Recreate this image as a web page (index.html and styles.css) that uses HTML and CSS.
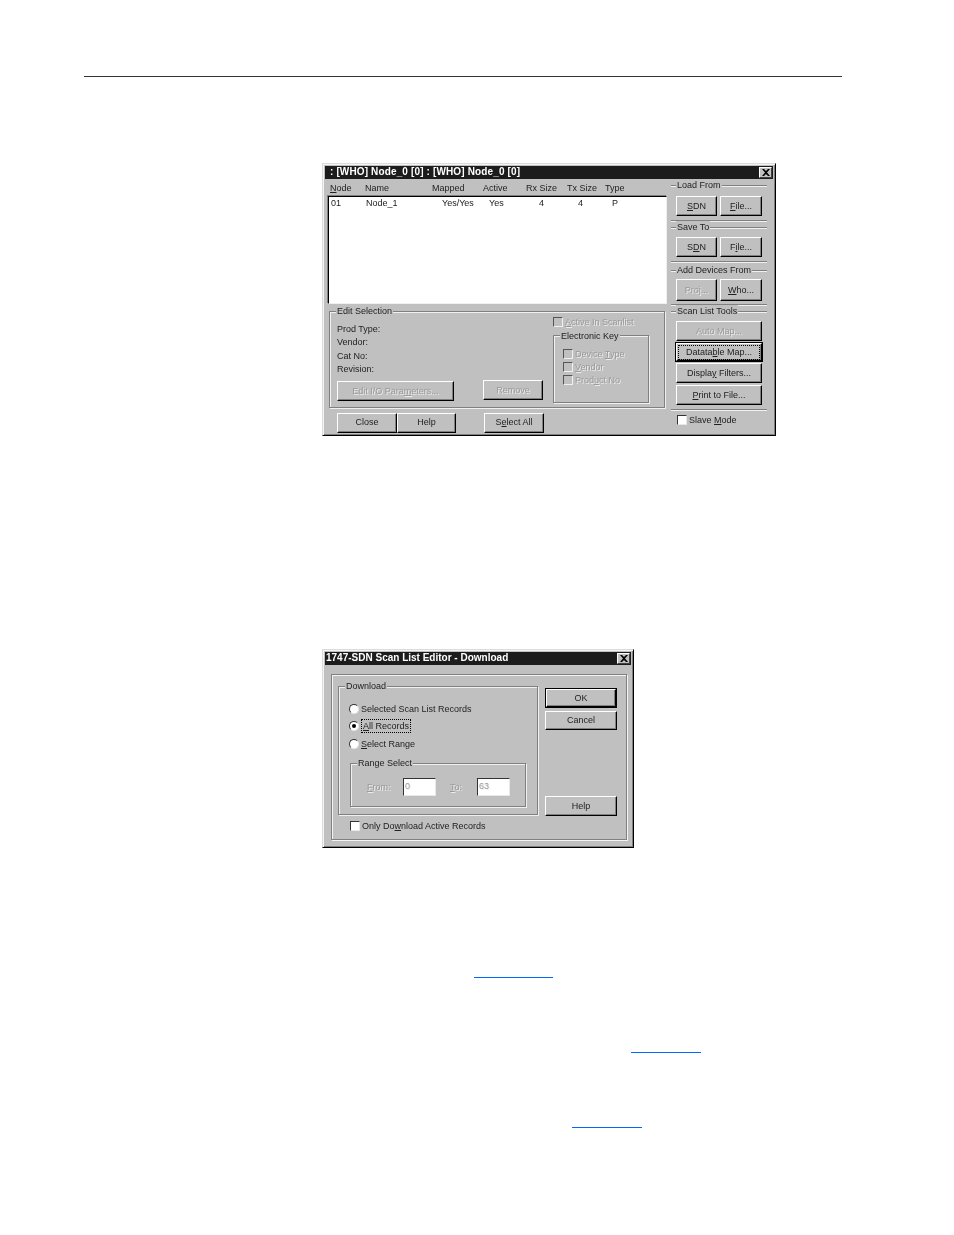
FILE: index.html
```html
<!DOCTYPE html>
<html lang="en">
<head>
<meta charset="utf-8">
<title>Scan List Editor</title>
<link rel="stylesheet" href="styles.css">
</head>
<body>
<div class="top-rule"></div>

<section class="dialog scan">
  <header class="title">
    <span>: [WHO] Node_0 [0] : [WHO] Node_0 [0]</span>
    <span class="close"><svg viewBox="0 0 8 7" width="8" height="7"><path d="M0 0h2l2 2 2-2h2L5 3.5 8 7H6L4 5 2 7H0l3-3.5z"/></svg></span>
  </header>
  <div class="scan-body">
    <div class="scan-left">
      <div class="cols head-cols">
        <span><u>N</u>ode</span><span>Name</span><span>Mapped</span><span>Active</span><span>Rx Size</span><span>Tx Size</span><span>Type</span>
      </div>
      <div class="listbox">
        <div class="cols row-cols">
          <span>01</span><span>Node_1</span><span>Yes/Yes</span><span>Yes</span><span>4</span><span>4</span><span>P</span>
        </div>
      </div>
      <div class="group edit">
        <span class="legend">Edit Selection</span>
        <div class="edit-left">
          <div class="info">Prod Type:</div>
          <div class="info">Vendor:</div>
          <div class="info">Cat No:</div>
          <div class="info">Revision:</div>
          <div class="edit-buttons">
            <button class="btn off b-edit">Edit I/O Para<u>m</u>eters...</button>
            <button class="btn off b-remove">Remove</button>
          </div>
        </div>
        <div class="edit-right">
          <label class="check off active-in"><i class="box"></i><span><u>A</u>ctive In Scanlist</span></label>
          <div class="group key">
            <span class="legend">Electronic Key</span>
            <label class="check off"><i class="box"></i><span>Device <u>T</u>ype</span></label>
            <label class="check off"><i class="box"></i><span><u>V</u>endor</span></label>
            <label class="check off"><i class="box"></i><span>Prod<u>u</u>ct No</span></label>
          </div>
        </div>
      </div>
      <div class="bottom-buttons">
        <button class="btn b-close">Close</button>
        <button class="btn b-help">Help</button>
        <button class="btn b-all">S<u>e</u>lect All</button>
      </div>
    </div>
    <aside class="scan-right">
      <div class="tool t-load">
        <span class="legend">Load From</span>
        <div class="pair"><button class="btn"><u>S</u>DN</button><button class="btn"><u>F</u>ile...</button></div>
      </div>
      <div class="tool t-save">
        <span class="legend">Save To</span>
        <div class="pair"><button class="btn">S<u>D</u>N</button><button class="btn">F<u>i</u>le...</button></div>
      </div>
      <div class="tool t-add">
        <span class="legend">Add Devices From</span>
        <div class="pair"><button class="btn off">Proj...</button><button class="btn"><u>W</u>ho...</button></div>
      </div>
      <div class="tool t-scan">
        <span class="legend">Scan List Tools</span>
        <button class="btn off">Auto Map...</button>
        <button class="btn default"><span class="focus wide">Datata<u>b</u>le Map...</span></button>
        <button class="btn">Displa<u>y</u> Filters...</button>
        <button class="btn"><u>P</u>rint to File...</button>
      </div>
      <label class="check slave"><i class="box live"></i><span>Slave <u>M</u>ode</span></label>
    </aside>
  </div>
</section>

<section class="dialog download">
  <header class="title">
    <span>1747-SDN Scan List Editor - Download</span>
    <span class="close"><svg viewBox="0 0 8 7" width="8" height="7"><path d="M0 0h2l2 2 2-2h2L5 3.5 8 7H6L4 5 2 7H0l3-3.5z"/></svg></span>
  </header>
  <div class="panel">
    <div class="panel-top">
      <div class="group dl">
        <span class="legend">Download</span>
        <label class="radio"><i class="dot"></i><span>Selected Scan List Records</span></label>
        <label class="radio"><i class="dot on"></i><span class="focus"><u>A</u>ll Records</span></label>
        <label class="radio"><i class="dot"></i><span><u>S</u>elect Range</span></label>
        <div class="group range">
          <span class="legend">Range Select</span>
          <span class="lbl-from off-text"><u>F</u>rom:</span>
          <span class="field off-text">0</span>
          <span class="lbl-to off-text"><u>T</u>o:</span>
          <span class="field off-text">63</span>
        </div>
      </div>
      <div class="dl-buttons">
        <button class="btn default b-ok">OK</button>
        <button class="btn b-cancel">Cancel</button>
        <button class="btn b-dlhelp">Help</button>
      </div>
    </div>
    <label class="check only"><i class="box live"></i><span>Only Do<u>w</u>nload Active Records</span></label>
  </div>
</section>

<div class="link link-a"></div>
<div class="link link-b"></div>
<div class="link link-c"></div>
</body>
</html>
```
FILE: styles.css
```css
* { box-sizing: border-box; }
html, body { margin: 0; padding: 0; background: #fff; }
body {
  width: 954px;
  height: 1235px;
  overflow: hidden;
  font: 9px/12px "Liberation Sans", Arial, sans-serif;
  color: #222;
}
.top-rule { height: 1px; width: 758px; margin: 76px 0 0 84px; background: #333; }

.dialog {
  margin-left: 322px;
  background: #c0c0c0;
  border: 1px solid;
  border-color: #dcdcdc #000 #000 #dcdcdc;
  box-shadow: inset 1px 1px 0 #f4f4f4, inset -1px -1px 0 #808080;
  padding: 2px 2px 0 2px;
  filter: blur(0.25px);
}
.scan { margin-top: 86px; width: 454px; height: 273px; }
.download { margin-top: 213px; width: 312px; height: 199px; }

.title {
  height: 13px;
  background: #1c1c1c;
  color: #fff;
  font-weight: 700;
  font-size: 10px;
  line-height: 11px;
  padding-left: 1px;
  display: flex;
  justify-content: space-between;
  align-items: flex-start;
  white-space: pre;
}
.scan .title { padding-left: 5px; letter-spacing: 0.14px; }
.close {
  width: 13px;
  height: 11px;
  margin: 1px 1px 0 0;
  background: #c0c0c0;
  border: 1px solid;
  border-color: #fff #404040 #404040 #fff;
  display: flex;
  align-items: center;
  justify-content: center;
}
.close svg { display: block; fill: #000; }

.btn {
  display: block;
  padding: 0;
  font: inherit;
  color: #222;
  background: #c0c0c0;
  border: 1px solid;
  border-color: #fff #000 #000 #fff;
  box-shadow: inset -1px -1px 0 #808080;
  text-align: center;
}
.btn.off { color: #9a9a9a; text-shadow: 1px 1px 0 #ececec; }
.btn.default { outline: 1px solid #000; }
.focus { border: 1px dotted #000; padding: 0 1px; }
.focus.wide { display: block; margin: 0 1px; line-height: 13px; }
.off-text { color: #9a9a9a; text-shadow: 1px 1px 0 #ececec; }

.group {
  position: relative;
  border: 1px solid #808080;
  box-shadow: 1px 1px 0 #f0f0f0, inset 1px 1px 0 #f0f0f0;
}
.legend {
  position: absolute;
  top: -7px;
  left: 6px;
  background: #c0c0c0;
  padding: 0 1px;
  line-height: 12px;
  white-space: nowrap;
}

/* scan list editor */
.scan-body { display: flex; height: 253px; }
.scan-left { width: 343px; padding: 3px 0 0 3px; }
.cols { display: grid; white-space: nowrap; }
.head-cols { grid-template-columns: 35px 67px 51px 43px 41px 38px 30px; height: 14px; padding-left: 2px; }
.row-cols { grid-template-columns: 35px 76px 47px 50px 39px 34px 20px; padding-left: 2px; height: 13px; }
.listbox {
  width: 339px;
  height: 108px;
  background: #fff;
  border: 1px solid;
  border-color: #000 #f0f0f0 #f0f0f0 #000;
  box-shadow: -1px -1px 0 #808080;
}
.edit {
  width: 336px;
  height: 97px;
  margin: 7px 0 0 1px;
  display: flex;
}
.edit-left { width: 223px; padding: 11px 0 0 7px; flex: none; }
.info { height: 13.3px; line-height: 13px; }
.edit-buttons { display: flex; align-items: flex-start; margin-top: 4px; }
.b-edit { width: 117px; height: 20px; margin-top: 1px; padding-bottom: 1px; }
.b-remove { width: 60px; height: 20px; margin-left: 29px; }
.edit-right { padding-top: 4px; }
.check { display: flex; align-items: center; white-space: nowrap; }
.check.off { color: #9a9a9a; text-shadow: 1px 1px 0 #ececec; }
.box {
  display: block;
  flex: none;
  width: 10px;
  height: 10px;
  margin-right: 2px;
  background: #c0c0c0;
  border: 1px solid;
  border-color: #555 #f0f0f0 #f0f0f0 #555;
}
.box.live { background: #fff; border-color: #333 #e8e8e8 #e8e8e8 #333; }
.active-in { height: 12px; margin-bottom: 2px; }
.key {
  width: 96px;
  height: 68px;
  margin-top: 7px;
  padding: 11px 0 0 9px;
}
.key .legend { top: -6px; }
.key .check { height: 13px; }
.bottom-buttons { display: flex; margin: 5px 0 0 9px; }
.bottom-buttons .btn { height: 20px; padding-bottom: 2px; }
.b-close { width: 60px; }
.b-help { width: 59px; }
.b-all { width: 60px; margin-left: 28px; }

.scan-right { width: 103px; padding-left: 3px; }
.tool {
  position: relative;
  width: 96px;
  border: solid #808080;
  border-width: 1px 0;
  box-shadow: 0 1px 0 #f0f0f0, inset 0 1px 0 #f0f0f0;
}
.tool .legend { left: 5px; top: -7px; }
.pair { display: flex; gap: 3px; padding-left: 5px; }
.pair .btn { height: 20px; width: 41px; }
.pair .btn + .btn { width: 42px; }
.t-load { margin-top: 6px; height: 36px; padding-top: 10px; }
.t-save { margin-top: 6px; height: 35px; padding-top: 9px; }
.t-add { margin-top: 8px; height: 35px; padding-top: 8px; }
.t-add .btn { height: 22px; }
.t-scan {
  margin-top: 6px;
  height: 99px;
  padding: 9px 0 0 5px;
  display: flex;
  flex-direction: column;
  align-items: flex-start;
  gap: 2px;
}
.t-scan .btn { width: 86px; height: 20px; }
.t-scan .btn.default { height: 18px; }
.slave { margin: 4px 0 0 6px; }

/* download dialog */
.panel {
  position: relative;
  width: 296px;
  height: 166px;
  margin: 9px 0 0 6px;
  border: 1px solid #808080;
  box-shadow: 1px 1px 0 #f4f4f4, inset 1px 1px 0 #f4f4f4;
  padding: 11px 0 0 6px;
}
.panel-top { display: flex; align-items: flex-start; }
.dl { width: 200px; height: 129px; padding: 13px 0 0 10px; }
.radio { display: flex; align-items: center; height: 17.5px; white-space: nowrap; }
.dot {
  display: block;
  flex: none;
  position: relative;
  width: 10px;
  height: 10px;
  margin-right: 2px;
  border-radius: 50%;
  background: #fff;
  border: 1px solid;
  border-color: #333 #e8e8e8 #e8e8e8 #333;
}
.dot.on::after {
  content: "";
  position: absolute;
  left: 2px;
  top: 2px;
  width: 4px;
  height: 4px;
  border-radius: 50%;
  background: #000;
}
.range {
  width: 176px;
  height: 44px;
  margin: 10px 0 0 1px;
  display: flex;
  align-items: center;
  padding: 5px 0 0 16px;
}
.lbl-from { width: 36px; }
.lbl-to { width: 27px; margin-left: 14px; }
.field {
  width: 33px;
  height: 18px;
  line-height: 15px;
  background: #fff;
  padding-left: 1px;
  border: 1px solid;
  border-color: #333 #e8e8e8 #e8e8e8 #333;
}
.dl-buttons { display: flex; flex-direction: column; align-items: flex-start; margin: 3px 0 0 7px; }
.dl-buttons .btn { width: 72px; height: 19px; }
.dl-buttons .b-ok { width: 70px; height: 18px; margin-left: 1px; }
.b-cancel { margin-top: 4px; padding-bottom: 1px; }
.dl-buttons .b-dlhelp { margin-top: 66px; height: 20px; }
.only { margin: 4px 0 0 12px; }

/* blue link rules on the page */
.link { height: 1px; background: #0066ff; }
.link-a { width: 79px; margin: 129px 0 0 474px; }
.link-b { width: 70px; margin: 74px 0 0 631px; }
.link-c { width: 70px; margin: 74px 0 0 572px; }
```
